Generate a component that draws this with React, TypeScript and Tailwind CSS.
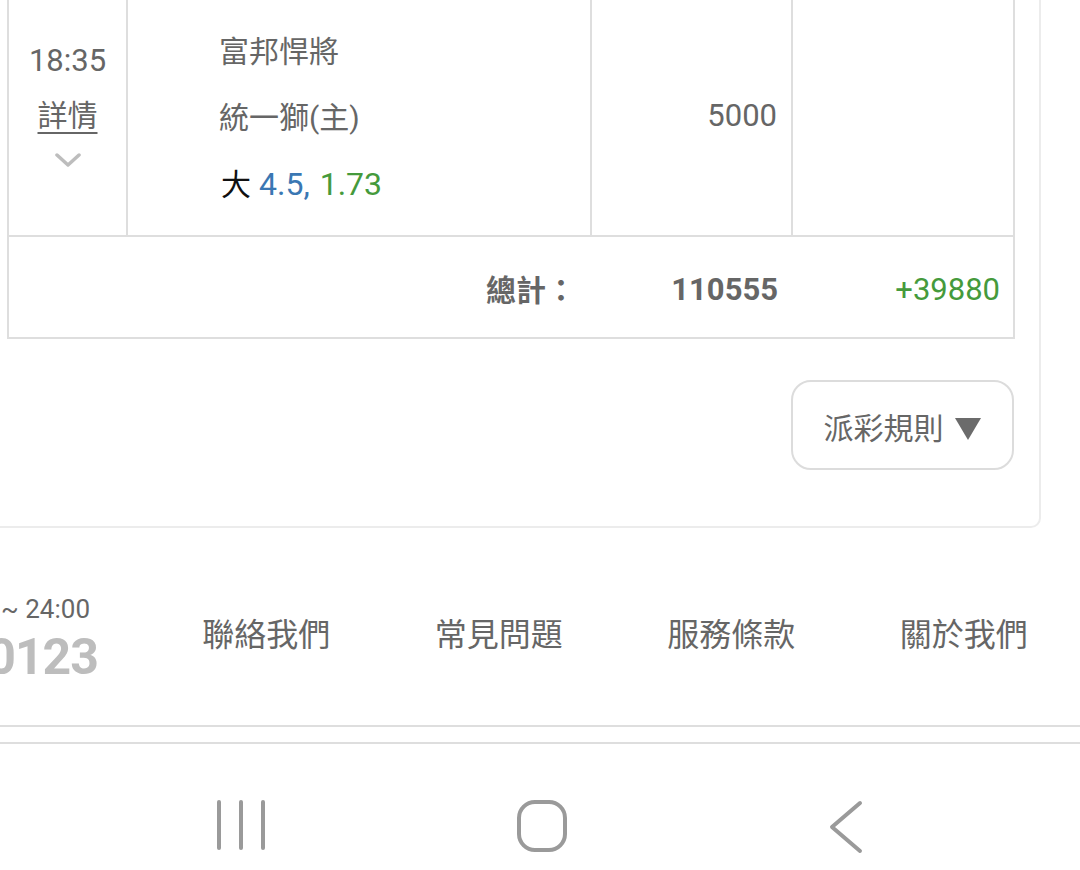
import React from 'react';

const font = { fontFamily: "Roboto, 'Noto Sans CJK TC', sans-serif" };

const ChevronDown = () => (
  <svg width="26" height="16" viewBox="0 0 26 16" fill="none">
    <path d="M2 3l11 10L24 3" stroke="#bdbdbd" strokeWidth="3.5" strokeLinecap="round" strokeLinejoin="round" />
  </svg>
);

const NavBar = () => (
  <div className="h-[126px] flex items-start pt-[56px]">
    <div className="w-[217px]" />
    <div className="flex gap-[18px] h-[50px]">
      <span className="w-[4px] h-full rounded-full bg-[#9a9a9a]" />
      <span className="w-[4px] h-full rounded-full bg-[#9a9a9a]" />
      <span className="w-[4px] h-full rounded-full bg-[#9a9a9a]" />
    </div>
    <div className="w-[252px]" />
    <div className="w-[50px] h-[52px] rounded-[18px] border-[4px] border-[#9a9a9a]" />
    <div className="w-[261px]" />
    <svg width="36" height="54" viewBox="0 0 36 54" fill="none">
      <path d="M32 3L4 27l28 24" stroke="#9a9a9a" strokeWidth="4" strokeLinecap="round" strokeLinejoin="round" />
    </svg>
  </div>
);

export default function App() {
  return (
    <div className="w-[1080px] h-[870px] overflow-hidden bg-white text-[#666]" style={font}>
      {/* card, left edge runs off screen */}
      <div className="-ml-[20px] w-[1061px] border-x-2 border-b-2 border-[#ececec] rounded-b-[10px] pb-[56px]">
        <div className="ml-[25px] w-[1008px] border-x-2 border-b-2 border-[#dedede]">
          <div className="grid grid-cols-[119px_464px_201px_220px] h-[237px] border-b-2 border-[#dedede]">
            <div className="flex flex-col items-center border-r-2 border-[#dedede] pt-[43px] text-[30px] leading-[36px]">
              <span className="text-[31px]">18:35</span>
              <span className="mt-[19px] underline underline-offset-[6px] decoration-[2px]">詳情</span>
              <span className="mt-[18px]"><ChevronDown /></span>
            </div>
            <div className="border-r-2 border-[#dedede] pl-[91px] pt-[19px] text-[30px] leading-[66px]">
              <div>富邦悍將</div>
              <div>統一獅(主)</div>
              <div className="pl-[2px]">
                <span className="text-[#111]">大</span>
                <span className="text-[#3a77b3] text-[32px] ml-[8px]">4.5,</span>
                <span className="text-[#459a3c] text-[32px] ml-[2px]"> 1.73</span>
              </div>
            </div>
            <div className="border-r-2 border-[#dedede] flex items-center justify-end pr-[14px] pb-[2px] text-[31px]">
              5000
            </div>
            <div />
          </div>
          <div className="grid grid-cols-[585px_201px_218px] h-[100px] items-center text-[31px] pt-[6px]">
            <div className="text-right pr-[18px] font-bold text-[30px]">總計：</div>
            <div className="text-right pr-[17px] font-bold">110555</div>
            <div className="text-right pr-[13px] text-[#459a3c]">+39880</div>
          </div>
        </div>
        <div className="flex justify-end mt-[41px] mr-[25px]">
          <button className="w-[223px] h-[90px] rounded-[20px] border-2 border-[#dcdcdc] flex items-center justify-center gap-[10px] pt-[7px] text-[30px] text-[#666]">
            <span>派彩規則</span>
            <svg width="28" height="24" viewBox="0 0 28 24">
              <path d="M1 1h26L14 23z" fill="#6b6b6b" />
            </svg>
          </button>
        </div>
      </div>

      {/* footer */}
      <div className="h-[199px] flex items-start border-b-2 border-[#dedede]">
        <div className="w-[98px] shrink-0 flex flex-col items-end overflow-hidden whitespace-nowrap pt-[66px]">
          <span className="text-[26px] leading-[30px] mr-[8px]">~ 24:00</span>
          <span className="mt-[7px] text-[50px] leading-[52px] font-bold text-[#bdbdbd] tracking-[-1px]">0123</span>
        </div>
        <div className="grid grid-cols-4 w-[932px] ml-[52px] text-[32px] leading-[44px] pt-[85px]">
          <span className="text-center">聯絡我們</span>
          <span className="text-center">常見問題</span>
          <span className="text-center">服務條款</span>
          <span className="text-center">關於我們</span>
        </div>
      </div>
      <div className="h-[15px]" />
      <div className="border-t-2 border-[#dedede]">
        <NavBar />
      </div>
    </div>
  );
}
